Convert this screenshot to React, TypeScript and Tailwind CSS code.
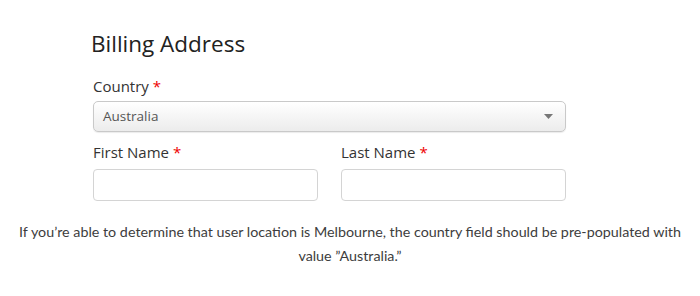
export default function App() {
  return (
    <div className="w-[700px] h-[296px] bg-white overflow-hidden">
      <div className="pl-[91px] pt-[29px] w-[566px] box-content font-['Open_Sans',sans-serif] text-[#222]">
        <h2 className="text-[22.5px] leading-[30px]">Billing Address</h2>
        <div className="pl-[2px] mt-[17px]">
          <label className="block text-[15px] leading-[20px] text-[#333]">
            Country <span className="text-[#e00]">*</span>
          </label>
          <div className="mt-[5px] h-[31px] w-[473px] rounded-[5px] border border-[#c9c9c9] bg-gradient-to-b from-white to-[#ececec] flex items-center justify-between pl-[9px] pr-[12px] shadow-[0_1px_1px_rgba(0,0,0,0.08)]">
            <span className="text-[13.5px] text-[#555]">Australia</span>
            <svg width="9" height="5" viewBox="0 0 9 5">
              <path d="M0 0h9L4.5 5z" fill="#777" />
            </svg>
          </div>
          <div className="mt-[10px] flex gap-[23px] w-[473px]">
            <div className="flex-1">
              <label className="block text-[15px] leading-[20px] text-[#333]">
                First Name <span className="text-[#e00]">*</span>
              </label>
              <div className="mt-[7px] h-[32px] rounded-[4px] border border-[#d4d4d4] bg-white" />
            </div>
            <div className="flex-1">
              <label className="block text-[15px] leading-[20px] text-[#333]">
                Last Name <span className="text-[#e00]">*</span>
              </label>
              <div className="mt-[7px] h-[32px] rounded-[4px] border border-[#d4d4d4] bg-white" />
            </div>
          </div>
        </div>
      </div>
      <p className="mt-[19px] text-center whitespace-nowrap text-[14.3px] leading-[24px] text-[#3d3d3d] font-['Lato',sans-serif]">
        If you’re able to determine that user location is Melbourne, the country field should be pre-populated with
        <br />
        value ”Australia.”
      </p>
    </div>
  )
}
